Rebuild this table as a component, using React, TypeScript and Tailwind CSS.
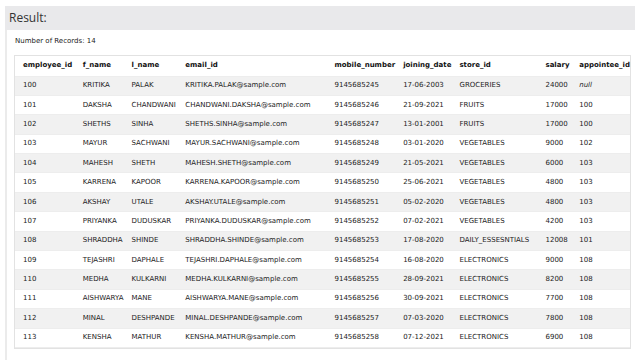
import React from "react";

type Row = [string, string, string, string, string, string, string, string, string | null];

const columns = [
  { key: "employee_id", w: 60 },
  { key: "f_name", w: 47 },
  { key: "l_name", w: 54 },
  { key: "email_id", w: 151 },
  { key: "mobile_number", w: 67 },
  { key: "joining_date", w: 56 },
  { key: "store_id", w: 87 },
  { key: "salary", w: 34 },
  { key: "appointee_id", w: 51 },
];

const rows: Row[] = [
  ["100", "KRITIKA", "PALAK", "KRITIKA.PALAK@sample.com", "9145685245", "17-06-2003", "GROCERIES", "24000", null],
  ["101", "DAKSHA", "CHANDWANI", "CHANDWANI.DAKSHA@sample.com", "9145685246", "21-09-2021", "FRUITS", "17000", "100"],
  ["102", "SHETHS", "SINHA", "SHETHS.SINHA@sample.com", "9145685247", "13-01-2001", "FRUITS", "17000", "100"],
  ["103", "MAYUR", "SACHWANI", "MAYUR.SACHWANI@sample.com", "9145685248", "03-01-2020", "VEGETABLES", "9000", "102"],
  ["104", "MAHESH", "SHETH", "MAHESH.SHETH@sample.com", "9145685249", "21-05-2021", "VEGETABLES", "6000", "103"],
  ["105", "KARRENA", "KAPOOR", "KARRENA.KAPOOR@sample.com", "9145685250", "25-06-2021", "VEGETABLES", "4800", "103"],
  ["106", "AKSHAY", "UTALE", "AKSHAY.UTALE@sample.com", "9145685251", "05-02-2020", "VEGETABLES", "4800", "103"],
  ["107", "PRIYANKA", "DUDUSKAR", "PRIYANKA.DUDUSKAR@sample.com", "9145685252", "07-02-2021", "VEGETABLES", "4200", "103"],
  ["108", "SHRADDHA", "SHINDE", "SHRADDHA.SHINDE@sample.com", "9145685253", "17-08-2020", "DAILY_ESSESNTIALS", "12008", "101"],
  ["109", "TEJASHRI", "DAPHALE", "TEJASHRI.DAPHALE@sample.com", "9145685254", "16-08-2020", "ELECTRONICS", "9000", "108"],
  ["110", "MEDHA", "KULKARNI", "MEDHA.KULKARNI@sample.com", "9145685255", "28-09-2021", "ELECTRONICS", "8200", "108"],
  ["111", "AISHWARYA", "MANE", "AISHWARYA.MANE@sample.com", "9145685256", "30-09-2021", "ELECTRONICS", "7700", "108"],
  ["112", "MINAL", "DESHPANDE", "MINAL.DESHPANDE@sample.com", "9145685257", "07-03-2020", "ELECTRONICS", "7800", "108"],
  ["113", "KENSHA", "MATHUR", "KENSHA.MATHUR@sample.com", "9145685258", "07-12-2021", "ELECTRONICS", "6900", "108"],
];

export default function App() {
  return (
    <div className="h-[360px] w-[635px] overflow-hidden bg-white pt-[6px] pl-[5px] font-['DejaVu_Sans',sans-serif] text-[#222]">
      <div className="flex h-[24px] items-center bg-[#e9e9eb] pl-[4px]">
        <h2 className="font-['Open_Sans',sans-serif] text-[12px] leading-none text-[#333]">Result:</h2>
      </div>

      <div className="h-[330px] border-l-2 border-[#ebebeb] pl-[7px] pt-[6px]">
        <p className="pl-[1px] text-[7px] leading-[10px]">Number of Records: 14</p>

        <div className="mt-[9px] w-[617px] border border-[#e2e2e2]">
          <table className="table-fixed border-collapse text-[7px] leading-none">
            <colgroup>
              {columns.map((c) => (
                <col key={c.key} style={{ width: c.w }} />
              ))}
            </colgroup>
            <thead>
              <tr className="h-[20px] border-b border-[#ededed] bg-white">
                {columns.map((c) => (
                  <th key={c.key} className="whitespace-nowrap pl-[8px] text-left font-bold text-[#111]">
                    {c.key}
                  </th>
                ))}
              </tr>
            </thead>
            <tbody>
              {rows.map((r, i) => (
                <tr
                  key={r[0]}
                  className={`h-[19.4px] border-b border-[#ededed] ${i % 2 === 0 ? "bg-[#f1f1f1]" : "bg-white"}`}
                >
                  {r.map((v, j) => (
                    <td key={j} className="whitespace-nowrap pl-[8px]">
                      {v === null ? <i>null</i> : v}
                    </td>
                  ))}
                </tr>
              ))}
            </tbody>
          </table>
        </div>
      </div>
    </div>
  );
}
